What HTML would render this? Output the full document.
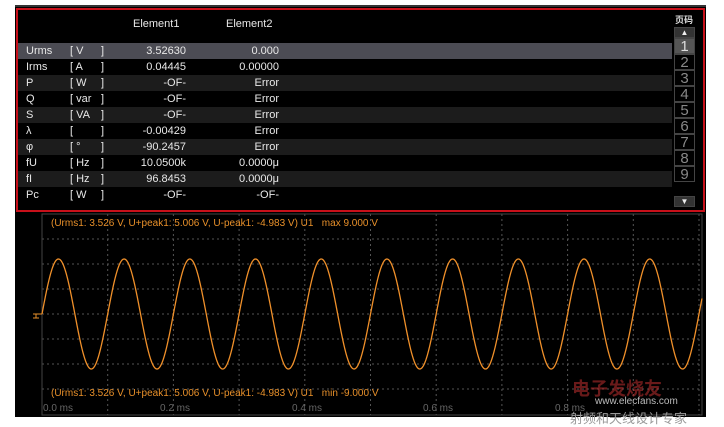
<!DOCTYPE html>
<html><head><meta charset="utf-8"><style>
*{margin:0;padding:0;box-sizing:border-box}
body{width:724px;height:425px;background:#fff;position:relative;overflow:hidden;font-family:"Liberation Sans","Noto Sans CJK SC",sans-serif}
#bg{position:absolute;left:15px;top:5px;width:691px;height:412px;background:#000;border-top:2px solid #333}
#frame{position:absolute;left:16px;top:8px;width:689px;height:204px;border:2px solid #c8101a}
.row{position:absolute;left:18px;width:654px;height:16px;font-size:11px;color:#e8e8e8;line-height:16px}
.row span{position:absolute}
.a{background:#1c1c1c}.h{background:#4c4c54}
.pg{position:absolute;left:674px;width:21px;height:16px;border:1px solid #444;color:#888;font-size:15px;line-height:15px;text-align:center;background:#000}
.ot{position:absolute;color:#e8902a;font-size:10px;white-space:nowrap}
.ax{position:absolute;color:#666;font-size:10px;top:403px}
</style></head><body>
<div id="bg"></div>
<div id="frame"></div>
<div style="position:absolute;left:133px;top:18px;color:#e8e8e8;font-size:11px">Element1</div>
<div style="position:absolute;left:226px;top:18px;color:#e8e8e8;font-size:11px">Element2</div>
<div id="rows"></div>
<div style="position:absolute;left:675px;top:13px;color:#ddd;font-size:9px;font-weight:bold">页码</div>
<div class="pg" style="top:27px;height:11px;background:#333;font-size:8px;line-height:9px;color:#eee">▲</div>
<div id="pages"></div>
<div class="pg" style="top:196px;height:11px;background:#333;font-size:8px;line-height:9px;color:#eee">▼</div>
<svg style="position:absolute;left:0;top:0" width="724" height="425">
<g id="grid" stroke="#555" stroke-dasharray="2,3" stroke-width="1"></g>
<rect x="42" y="214" width="660" height="201" fill="none" stroke="#444"/>
<path d="M42 314H33M36 314V318M33 318H39" stroke="#e8902a" fill="none" stroke-width="1"/>
<polyline id="wave" fill="none" stroke="#f0902a" stroke-width="1.3"/>
</svg>
<div class="ot" style="left:51px;top:218px">(Urms1: 3.526 V, U+peak1: 5.006 V, U-peak1: -4.983 V) U1&nbsp;&nbsp;&nbsp;max 9.000 V</div>
<div class="ot" style="left:51px;top:388px">(Urms1: 3.526 V, U+peak1: 5.006 V, U-peak1: -4.983 V) U1&nbsp;&nbsp;&nbsp;min -9.000 V</div>
<div class="ax" style="left:43px">0.0 ms</div>
<div class="ax" style="left:160px">0.2 ms</div>
<div class="ax" style="left:292px">0.4 ms</div>
<div class="ax" style="left:423px">0.6 ms</div>
<div class="ax" style="left:555px">0.8 ms</div>
<div style="position:absolute;left:572px;top:375px;color:#c03030;opacity:.55;font-size:18px;font-weight:bold">电子发烧友</div>
<div style="position:absolute;left:595px;top:396px;color:#bbb;font-size:10px">www.elecfans.com</div>
<div style="position:absolute;left:570px;top:408px;color:#999;font-size:13px">射频和天线设计专家</div>
<script>
var R=[["Urms","V","3.52630","0.000"],["Irms","A","0.04445","0.00000"],["P","W","-OF-","Error"],["Q","var","-OF-","Error"],["S","VA","-OF-","Error"],["λ","","-0.00429","Error"],["φ","°","-90.2457","Error"],["fU","Hz","10.0500k","0.0000μ"],["fI","Hz","96.8453","0.0000μ"],["Pc","W","-OF-","-OF-"]];
var h="";R.forEach(function(r,i){var c=i==0?"h":(i%2==0?"a":"");
h+='<div class="row '+c+'" style="top:'+(43+i*16)+'px"><span style="left:8px">'+r[0]+'</span><span style="left:52px">[ '+r[1]+'</span><span style="left:83px">]</span><span style="right:486px">'+r[2]+'</span><span style="right:393px">'+r[3]+'</span></div>';});
document.getElementById("rows").innerHTML=h;
var p="";for(var i=1;i<=9;i++)p+='<div class="pg" style="top:'+(22+i*16)+'px;'+(i==1?'background:#555;color:#ddd':'')+'">'+i+'</div>';
document.getElementById("pages").innerHTML=p;
var g="";for(var x=42+65.7;x<700;x+=65.7)g+='<line x1="'+x+'" y1="214" x2="'+x+'" y2="415"/>';
[239,264,289,314,339,364,389].forEach(function(y){g+='<line x1="42" y1="'+y+'" x2="702" y2="'+y+'"/>'});
document.getElementById("grid").innerHTML=g;
var pts=[];for(var x=42;x<=702;x+=0.5)pts.push(x+","+(314-55*Math.sin(2*Math.PI*(x-42)/65.7)).toFixed(2));
document.getElementById("wave").setAttribute("points",pts.join(" "));
</script>
</body></html>
